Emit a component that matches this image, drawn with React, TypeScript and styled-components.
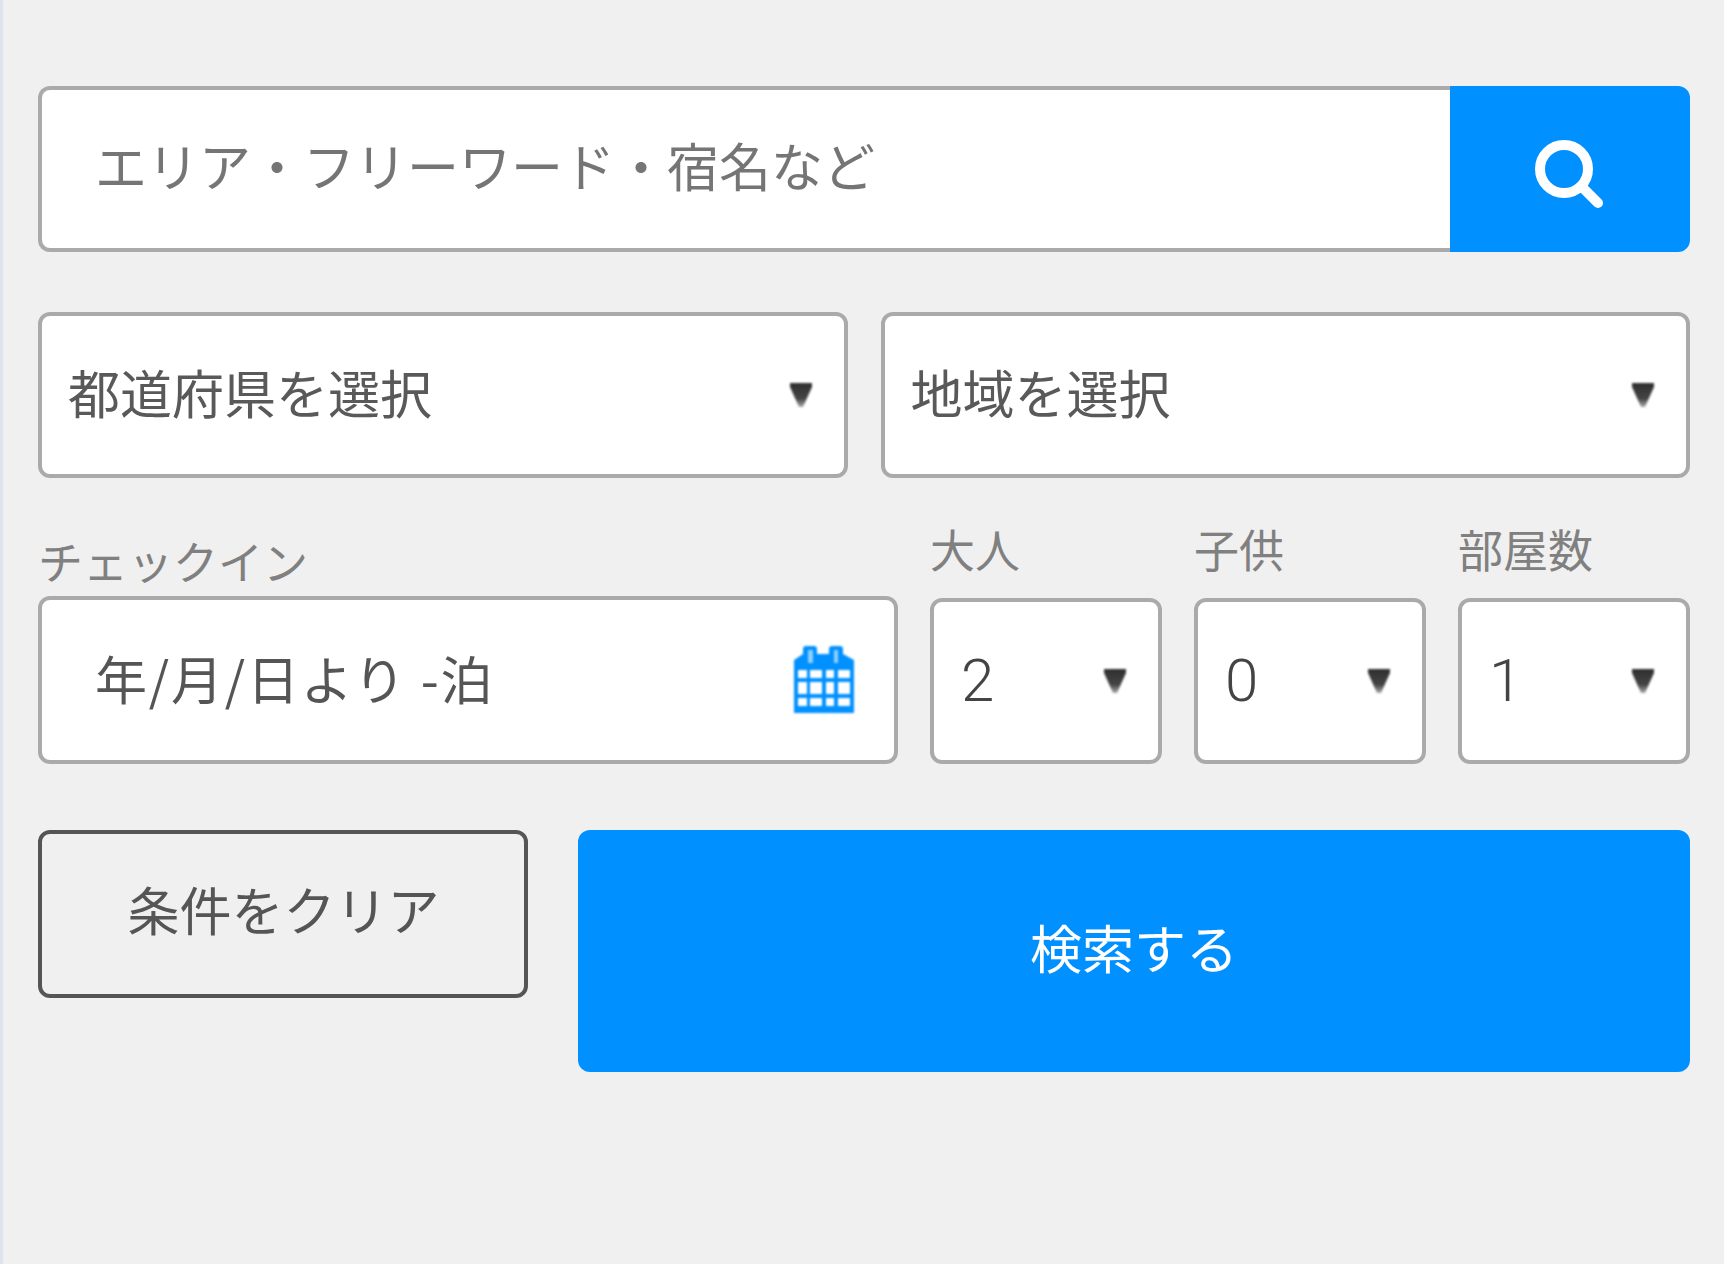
import React from "react";
import styled, { createGlobalStyle } from "styled-components";

const GlobalStyle = createGlobalStyle`
  html, body {
    margin: 0;
    padding: 0;
    background: #f0f0f0;
  }
  body {
    font-family: "Noto Sans CJK JP", "Noto Sans", sans-serif;
  }
`;

const columns = [
  [4, 9],
  [16, 12],
  [32, 8],
  [44, 12],
];
const rows = [
  [24, 8],
  [36, 12],
  [52, 8],
];

const SearchIcon = () => (
  <svg width="70" height="70" viewBox="0 0 70 70" fill="none">
    <circle cx="29" cy="29" r="24" stroke="#fff" strokeWidth="10" />
    <line x1="47" y1="47" x2="63" y2="63" stroke="#fff" strokeWidth="10" strokeLinecap="round" />
  </svg>
);

const CalendarIcon = () => (
  <CalendarSvg width="60" height="67" viewBox="0 0 60 67">
    <path
      d="M0 14 L9 8 V3 Q9 0 12 0 H20 Q23 0 23 3 V8 H35 V3 Q35 0 38 0 H46 Q49 0 49 3 V8 L60 14 V67 H0 Z"
      fill="#0090ff"
    />
    <rect x="14" y="4" width="5" height="13" fill="#8fcfff" />
    <rect x="40" y="4" width="4" height="13" fill="#8fcfff" />
    {rows.map(([y, h]) =>
      columns.map(([x, w]) => (
        <rect key={`${x}-${y}`} x={x} y={y} width={w} height={h} fill="#fff" />
      ))
    )}
  </CalendarSvg>
);

const Arrow = () => (
  <ArrowSvg width="24" height="24" viewBox="0 0 24 24">
    <defs>
      <linearGradient id="arrowFade" x1="0" y1="0" x2="0" y2="1">
        <stop offset="0" stopColor="#2f2f2f" />
        <stop offset="0.65" stopColor="#444" />
        <stop offset="1" stopColor="#aaa" />
      </linearGradient>
    </defs>
    <polygon points="1,0 23,0 23,4 14,24 10,24 1,4" fill="url(#arrowFade)" />
  </ArrowSvg>
);

const App: React.FC = () => {
  return (
    <Page>
      <GlobalStyle />
      <SearchRow>
        <SearchField>
          <Placeholder>エリア・フリーワード・宿名など</Placeholder>
        </SearchField>
        <SearchButton type="button" aria-label="検索">
          <SearchIcon />
        </SearchButton>
      </SearchRow>

      <AreaRow>
        <AreaSelect>
          <SelectText>都道府県を選択</SelectText>
          <Arrow />
        </AreaSelect>
        <AreaSelect>
          <SelectText>地域を選択</SelectText>
          <Arrow />
        </AreaSelect>
      </AreaRow>

      <StayRow>
        <DateColumn>
          <DateLabel>チェックイン</DateLabel>
          <DateField>
            <DateText>年/月/日より -泊</DateText>
            <CalendarIcon />
          </DateField>
        </DateColumn>
        {[
          ["大人", "2"],
          ["子供", "0"],
          ["部屋数", "1"],
        ].map(([label, value]) => (
          <CountColumn key={label}>
            <CountLabel>{label}</CountLabel>
            <CountSelect>
              <CountText>{value}</CountText>
              <Arrow />
            </CountSelect>
          </CountColumn>
        ))}
      </StayRow>

      <ButtonRow>
        <ClearButton type="button">条件をクリア</ClearButton>
        <SubmitButton type="button">検索する</SubmitButton>
      </ButtonRow>
    </Page>
  );
};

const Page = styled.div`
  box-sizing: border-box;
  min-height: 100vh;
  padding: 86px 34px 0 35px;
  background: #f0f0f0;
  border-left: 3px solid #dfe3ec;
`;

const SearchRow = styled.div`
  display: flex;
  height: 166px;
`;

const SearchField = styled.div`
  flex: 1;
  display: flex;
  align-items: center;
  box-sizing: border-box;
  padding: 0 0 10px 53px;
  background: #fff;
  border: 4px solid #aaa;
  border-right: none;
  border-radius: 12px 0 0 12px;
`;

const Placeholder = styled.span`
  font-size: 52px;
  color: #757575;
  white-space: nowrap;
`;

const SearchButton = styled.button`
  width: 240px;
  display: flex;
  align-items: center;
  justify-content: center;
  padding: 12px 0 0;
  border: none;
  background: #0090ff;
  border-radius: 0 12px 12px 0;
`;

const AreaRow = styled.div`
  display: flex;
  gap: 33px;
  margin-top: 60px;
`;

const AreaSelect = styled.div`
  flex: 1;
  height: 166px;
  display: flex;
  align-items: center;
  justify-content: space-between;
  box-sizing: border-box;
  padding: 0 31px 0 26px;
  background: #fff;
  border: 4px solid #aaa;
  border-radius: 12px;
`;

const SelectText = styled.span`
  font-size: 52px;
  color: #595959;
  white-space: nowrap;
  margin-bottom: 8px;
`;

const ArrowSvg = styled.svg`
  flex: none;
  filter: blur(0.8px);
`;

const StayRow = styled.div`
  display: flex;
  align-items: flex-end;
  gap: 32px;
  margin-top: 41px;
`;

const DateColumn = styled.div`
  width: 860px;
  display: flex;
  flex-direction: column;
`;

const DateLabel = styled.div`
  font-size: 45px;
  line-height: 60px;
  color: #808080;
  margin-bottom: 5px;
  white-space: nowrap;
`;

const DateField = styled.div`
  height: 168px;
  display: flex;
  align-items: center;
  justify-content: space-between;
  box-sizing: border-box;
  padding: 0 40px 0 53px;
  background: #fff;
  border: 4px solid #aaa;
  border-radius: 12px;
`;

const DateText = styled.span`
  font-size: 52px;
  letter-spacing: 1.8px;
  color: #555;
  white-space: nowrap;
  margin-bottom: 6px;
`;

const CalendarSvg = styled.svg`
  flex: none;
  filter: blur(0.8px);
  margin-bottom: 2px;
`;

const CountColumn = styled.div`
  width: 232px;
  display: flex;
  flex-direction: column;
`;

const CountLabel = styled.div`
  font-size: 45px;
  line-height: 60px;
  color: #808080;
  margin-bottom: 19px;
  white-space: nowrap;
`;

const CountSelect = styled.div`
  height: 166px;
  display: flex;
  align-items: center;
  justify-content: space-between;
  box-sizing: border-box;
  padding: 0 31px 0 27px;
  background: #fff;
  border: 4px solid #aaa;
  border-radius: 12px;
`;

const CountText = styled.span`
  font-family: Roboto, "Liberation Sans", sans-serif;
  font-weight: 300;
  font-size: 60px;
  color: #444;
  margin-bottom: 2px;
`;

const ButtonRow = styled.div`
  display: flex;
  align-items: flex-start;
  gap: 50px;
  margin-top: 66px;
`;

const ClearButton = styled.button`
  width: 490px;
  height: 168px;
  padding: 0 0 11px 1px;
  font-family: inherit;
  font-size: 52px;
  color: #555;
  background: transparent;
  border: 4px solid #555;
  border-radius: 12px;
`;

const SubmitButton = styled.button`
  flex: 1;
  height: 242px;
  padding: 0 0 9px;
  font-family: inherit;
  font-size: 52px;
  color: #fff;
  background: #0090ff;
  border: none;
  border-radius: 12px;
`;

export default App;
